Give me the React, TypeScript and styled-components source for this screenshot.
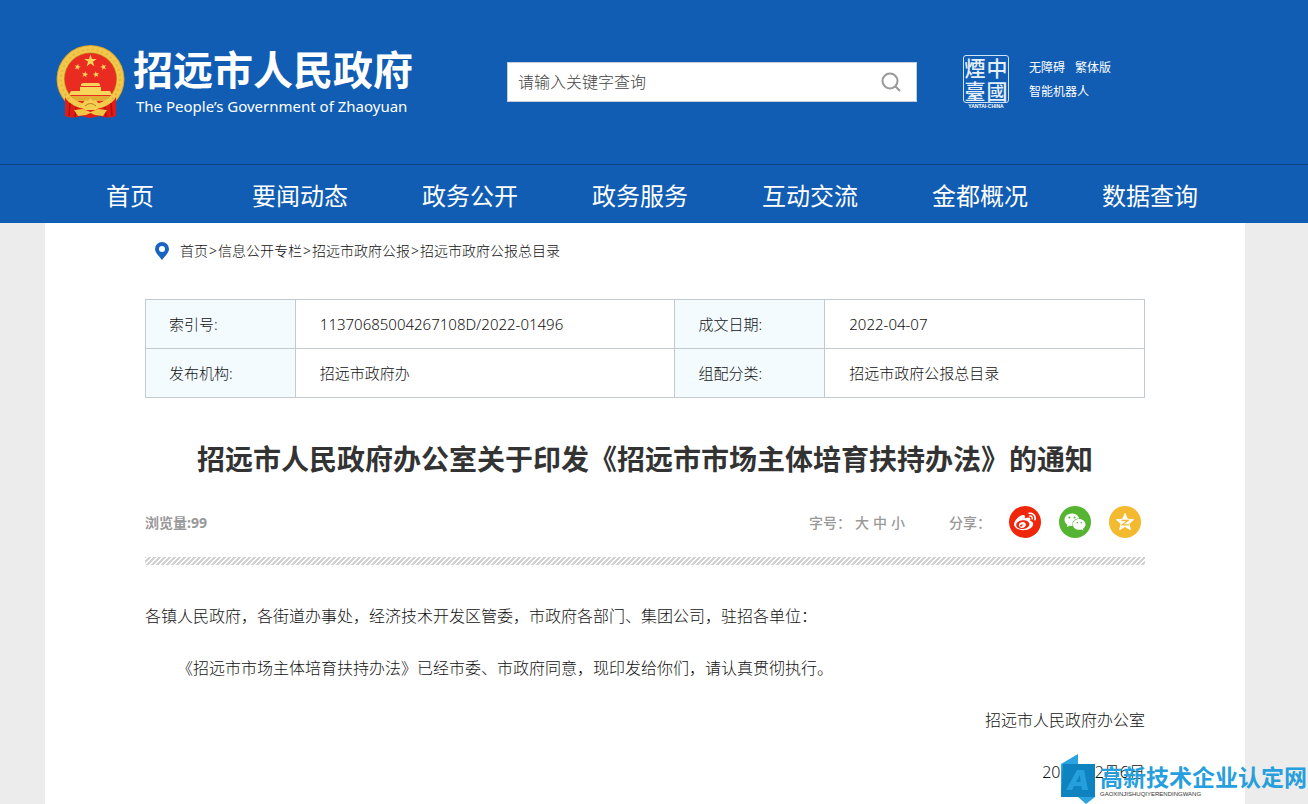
import React from "react";
import styled, { createGlobalStyle } from "styled-components";
import { FaWeibo, FaWeixin } from "react-icons/fa";

const sans = `"Noto Sans", "Noto Sans CJK SC", sans-serif`;
const cjk = `"Noto Sans CJK SC", "Noto Sans", sans-serif`;

const GlobalStyle = createGlobalStyle`
  *, *::before, *::after { box-sizing: border-box; }
  body { margin: 0; background: #ececec; color: #333; font-family: ${sans}; font-size: 14px; }
  a { color: inherit; text-decoration: none; }
  button, input { font-family: inherit; }
  h1, p { margin: 0; }
`;

const Page = styled.div`
  position: relative;
  min-height: 100vh;
  display: flex;
  flex-direction: column;
  overflow: hidden;
`;

const Header = styled.header`
  background: #115db3;
  color: #fff;
  padding-right: 18px;
`;

const Container = styled.div`
  max-width: 1200px;
  width: 100%;
  margin: 0 auto;
`;

const Masthead = styled(Container)`
  display: flex;
  align-items: center;
  height: 164px;
  padding-left: 11px;
`;

const Brand = styled.a`
  display: flex;
  align-items: center;
  gap: 8px;
  width: 451px;
`;

const BrandText = styled.span`
  display: flex;
  flex-direction: column;
  gap: 4px;
  padding-bottom: 4px;
  white-space: nowrap;
`;

const BrandName = styled.span`
  font: 700 40px/48px ${cjk};
`;

const BrandLatin = styled.span`
  font: 400 15px/20px "Noto Sans", sans-serif;
  padding-left: 3px;
`;

const Search = styled.form`
  display: flex;
  align-items: center;
  width: 410px;
  height: 40px;
  background: #fff;
  border: 1px solid #c5cedb;
`;

const SearchInput = styled.input`
  flex: 1;
  min-width: 0;
  height: 100%;
  padding: 0 10px;
  border: 0;
  outline: 0;
  background: none;
  font-size: 16px;
  font-weight: 300;
  color: #333;
  &::placeholder { color: #444; opacity: 1; }
`;

const SearchButton = styled.button`
  display: flex;
  align-items: center;
  justify-content: center;
  width: 50px;
  height: 100%;
  padding: 0;
  border: 0;
  background: none;
  cursor: pointer;
`;

const Seal = styled.a`
  display: flex;
  flex-direction: column;
  align-items: center;
  width: 46px;
  margin-left: 46px;
`;

const SealFace = styled.span`
  display: grid;
  grid-template-columns: 22px 22px;
  grid-template-rows: 23px 23px;
  border: 1px solid #cfe4f7;
  border-radius: 3px;
  font: 500 21px/23px "Noto Sans CJK TC", sans-serif;
  color: #e3f0fb;
  text-align: center;
`;

const SealCaption = styled.span`
  font: 700 5px/7px "Liberation Sans", sans-serif;
  white-space: nowrap;
`;

const QuickLinks = styled.nav`
  display: grid;
  grid-template-columns: auto auto;
  column-gap: 10px;
  margin-left: 20px;
  padding-bottom: 6px;
  font: 400 12px/24px ${cjk};
  white-space: nowrap;
`;

const WideLink = styled.a`
  grid-column: 1 / -1;
`;

const NavBar = styled.nav`
  border-top: 1px solid #0b4584;
  margin-right: -18px;
  padding-right: 18px;
`;

const NavList = styled(Container)`
  display: grid;
  grid-template-columns: repeat(7, 170px);
  height: 58px;
`;

const NavLink = styled.a`
  font: 400 24px/60px ${cjk};
  text-align: center;
`;

const Body = styled.div`
  flex: 1;
  display: flex;
  padding-right: 18px;
`;

const Sheet = styled(Container)`
  background: #fff;
  padding: 0 100px;
`;

const Breadcrumb = styled.nav`
  display: flex;
  align-items: center;
  height: 56px;
  padding-left: 9px;
  font-weight: 300;
  line-height: 20px;
  color: #111;
  svg { margin-right: 10px; }
`;

const Separator = styled.span`
  padding: 0 1px;
`;

const InfoTable = styled.table`
  width: 100%;
  margin-top: 20px;
  border-collapse: collapse;
  table-layout: fixed;
  font-size: 15px;
  line-height: 24px;
  color: #111;
`;

const Label = styled.th`
  width: 15%;
  height: 49px;
  padding: 0 23px;
  border: 1px solid #c3cacf;
  background: #f3fbff;
  font-weight: 300;
  text-align: left;
`;

const Value = styled.td<{ $width: string }>`
  width: ${(p) => p.$width};
  padding: 0 24px;
  border: 1px solid #c3cacf;
  font-weight: 300;
`;

const Title = styled.h1`
  margin-top: 40px;
  font: 700 28px/40px ${cjk};
  text-align: center;
`;

const Meta = styled.div`
  display: flex;
  align-items: center;
  height: 32px;
  margin-top: 28px;
  padding-right: 4px;
  color: #999;
`;

const Views = styled.span`
  flex: 1;
  font-weight: 700;
`;

const SizePicker = styled.div`
  display: flex;
  align-items: center;
  gap: 4px;
  font-weight: 500;
  margin-right: 44px;
`;

const SizeButton = styled.button`
  padding: 0;
  border: 0;
  background: none;
  color: inherit;
  font-size: 14px;
  font-weight: 500;
  cursor: pointer;
`;

const Share = styled.div`
  display: flex;
  align-items: center;
  gap: 18px;
  font-weight: 500;
`;

const ShareButton = styled.button<{ $color: string }>`
  display: flex;
  align-items: center;
  justify-content: center;
  width: 32px;
  height: 32px;
  padding: 0;
  border: 0;
  border-radius: 50%;
  background: ${(p) => p.$color};
  color: #fff;
  cursor: pointer;
`;

const Stripe = styled.div`
  height: 8px;
  margin-top: 19px;
  background: linear-gradient(135deg, #d2d2d2 12%, #fff 12% 38%, #d2d2d2 38% 62%, #fff 62% 88%, #d2d2d2 88%);
  background-size: 5px 5px;
`;

const Article = styled.article`
  margin-top: 25px;
  font-size: 16px;
  font-weight: 300;
  line-height: 52px;
  color: #111;
`;

const Paragraph = styled.p<{ $indent?: boolean }>`
  text-indent: ${(p) => (p.$indent ? "2em" : "0")};
`;

const SignOff = styled.p`
  text-align: right;
`;

const Watermark = styled.div`
  position: absolute;
  right: 1px;
  bottom: 0;
  display: flex;
  align-items: center;
  gap: 4px;
  height: 50px;
  white-space: nowrap;
`;

const WatermarkText = styled.div`
  display: flex;
  flex-direction: column;
  padding-top: 2px;
`;

const WatermarkName = styled.span`
  font: 700 23px/28px ${cjk};
  color: #279fdc;
`;

const WatermarkLatin = styled.span`
  font: 400 6px/8px "Liberation Sans", sans-serif;
  color: #333;
`;

const starPath = (cx: number, cy: number, r: number, tilt = 0) =>
  Array.from({ length: 10 }, (_, i) => {
    const a = ((i * 36 - 90 + tilt) * Math.PI) / 180;
    const d = i % 2 ? r * 0.39 : r;
    return `${(cx + d * Math.cos(a)).toFixed(2)},${(cy + d * Math.sin(a)).toFixed(2)}`;
  }).join(" ");

const Emblem = () => (
  <svg width="69" height="74" viewBox="0 0 69 74" aria-hidden="true">
    <circle cx="34.500" cy="34" r="34" fill="#d9a32c" />
    <circle cx="34.500" cy="34" r="33" fill="#f1c84b" />
    <circle cx="34.500" cy="34" r="29.500" fill="none" stroke="#e6b53e" strokeWidth="2" strokeDasharray="2 3" />
    <circle cx="34.500" cy="34" r="26.500" fill="#c5881f" />
    <circle cx="34.500" cy="34" r="25.800" fill="#ea2b22" />
    <g fill="#f8d65a">
      <polygon points={starPath(34.5, 16, 6.5)} />
      <polygon points={starPath(21.5, 22, 3.4, 15)} />
      <polygon points={starPath(47.5, 22, 3.4, -15)} />
      <polygon points={starPath(29, 29.5, 3.4, 10)} />
      <polygon points={starPath(40, 29.5, 3.4, -10)} />
      <path d="M25 39 L27 38 H42 L44 39 V41 H25Z" />
      <path d="M24 42 H45 V46 H54 L56 50 H13 L15 46 H24Z" />
      <path d="M15 51 H54 L50 56 H19Z" fill="#e3ad35" />
    </g>
    <path d="M9 52 Q12 59 24 63 L34.500 65 L45 63 Q57 59 60 52 L60 71 Q52 74 44 71 L34 73 L25 71 Q16 74 9 71Z" fill="#df1d16" />
    <path d="M14 58 L13 71 M20 62 L19 72 M55 58 L56 71 M49 62 L50 72" stroke="#ad110d" strokeWidth="1.500" />
    <path d="M13 50 Q23 60 34.500 59 Q46 60 56 50 L54 57 Q45 65 34.500 63 Q24 65 15 57Z" fill="#f2ca4c" />
    <path d="M27 58 L29 55 L32 56 L34.500 53 L37 56 L40 55 L42 58 L44 61 L40 65 H29 L25 61Z" fill="#f5cf51" />
    <path d="M18 65 L27 64 L34.500 67 L42 64 L51 65 L47 71 L39 70 L34.500 68 L30 70 L22 71Z" fill="#f0c445" />
    <path d="M29 61 Q34.500 56 40 61" fill="none" stroke="#b97c18" />
  </svg>
);

const navItems = ["首页", "要闻动态", "政务公开", "政务服务", "互动交流", "金都概况", "数据查询"];
const crumbs = ["首页", "信息公开专栏", "招远市政府公报", "招远市政府公报总目录"];
const infoRows = [
  ["索引号:", "11370685004267108D/2022-01496", "成文日期:", "2022-04-07"],
  ["发布机构:", "招远市政府办", "组配分类:", "招远市政府公报总目录"],
];

export default function App() {
  return (
    <Page>
      <GlobalStyle />
      <Header>
        <Masthead>
          <Brand href="#">
            <Emblem />
            <BrandText>
              <BrandName>招远市人民政府</BrandName>
              <BrandLatin>The People’s Government of Zhaoyuan</BrandLatin>
            </BrandText>
          </Brand>
          <Search onSubmit={(e) => e.preventDefault()}>
            <SearchInput aria-label="请输入关键字查询" placeholder="请输入关键字查询" />
            <SearchButton type="submit" aria-label="查询">
              <svg width="20" height="20" viewBox="0 0 20 20" fill="none" stroke="#999" strokeWidth="2">
                <circle cx="9" cy="9" r="7.500" />
                <path d="M14.300 14.300 L19 19" />
              </svg>
            </SearchButton>
          </Search>
          <Seal href="#">
            <SealFace>
              <span>煙</span>
              <span>中</span>
              <span>臺</span>
              <span>國</span>
            </SealFace>
            <SealCaption>YANTAI·CHINA</SealCaption>
          </Seal>
          <QuickLinks>
            <a href="#">无障碍</a>
            <a href="#">繁体版</a>
            <WideLink href="#">智能机器人</WideLink>
          </QuickLinks>
        </Masthead>
        <NavBar>
          <NavList>
            {navItems.map((item) => (
              <NavLink href="#" key={item}>{item}</NavLink>
            ))}
          </NavList>
        </NavBar>
      </Header>
      <Body>
        <Sheet as="main">
          <Breadcrumb>
            <svg width="16" height="20" viewBox="0 0 16 20" aria-hidden="true">
              <path
                fillRule="evenodd"
                fill="#1a63c0"
                d="M8 1a7 7 0 0 1 7 7c0 4-4.500 7.500-7 11C5.500 15.500 1 12 1 8a7 7 0 0 1 7-7zm0 4a3 3 0 1 0 0 6a3 3 0 0 0 0-6z"
              />
            </svg>
            {crumbs.map((c, i) => (
              <React.Fragment key={c}>
                {i > 0 && <Separator>&gt;</Separator>}
                <a href="#">{c}</a>
              </React.Fragment>
            ))}
          </Breadcrumb>
          <InfoTable>
            <tbody>
              {infoRows.map(([l1, v1, l2, v2]) => (
                <tr key={l1}>
                  <Label scope="row">{l1}</Label>
                  <Value $width="38%">{v1}</Value>
                  <Label scope="row">{l2}</Label>
                  <Value $width="32%">{v2}</Value>
                </tr>
              ))}
            </tbody>
          </InfoTable>
          <Title>招远市人民政府办公室关于印发《招远市市场主体培育扶持办法》的通知</Title>
          <Meta>
            <Views>浏览量:99</Views>
            <SizePicker>
              <span>字号：</span>
              <SizeButton>大</SizeButton>
              <SizeButton>中</SizeButton>
              <SizeButton>小</SizeButton>
            </SizePicker>
            <Share>
              <span>分享：</span>
              <ShareButton $color="#f0260b" aria-label="微博"><FaWeibo size={22} /></ShareButton>
              <ShareButton $color="#55b532" aria-label="微信"><FaWeixin size={22} /></ShareButton>
              <ShareButton $color="#f3b92f" aria-label="QQ空间">
                <svg width="20" height="20" viewBox="0 0 20 20">
                  <path
                    fill="#fff"
                    stroke="#fff"
                    strokeLinejoin="round"
                    d="M10 1.500 L12.400 7.200 L18.600 7.700 L13.900 11.700 L15.400 17.700 L10 14.500 L4.600 17.700 L6.100 11.700 L1.400 7.700 L7.600 7.200Z"
                  />
                  <path d="M6.500 8.500 H13 L7.500 12.800 H14" fill="none" stroke="#f3b92f" strokeWidth="1.300" />
                </svg>
              </ShareButton>
            </Share>
          </Meta>
          <Stripe />
          <Article>
            <Paragraph>各镇人民政府，各街道办事处，经济技术开发区管委，市政府各部门、集团公司，驻招各单位：</Paragraph>
            <Paragraph $indent>《招远市市场主体培育扶持办法》已经市委、市政府同意，现印发给你们，请认真贯彻执行。</Paragraph>
            <SignOff>招远市人民政府办公室</SignOff>
            <SignOff>2022年2月6日</SignOff>
          </Article>
        </Sheet>
      </Body>
      <Watermark>
        <svg width="36" height="50" viewBox="0 0 36 50" aria-hidden="true">
          <path d="M1 10 L18 0 V10 H35 V43 L26 50 L18 43 H1Z" fill="#2ba3e0" />
          <path d="M3 10 H35 V43 H1Z" fill="#0f83c0" />
          <path
            fillRule="evenodd"
            fill="#259fdc"
            d="M6 36 L17 16 H24 L28 36 H22 L21.300 32 H14 L12 36Z M16 28 H20.700 L19.800 21Z"
          />
        </svg>
        <WatermarkText>
          <WatermarkName>高新技术企业认定网</WatermarkName>
          <WatermarkLatin>GAOXINJISHUQIYERENDINGWANG</WatermarkLatin>
        </WatermarkText>
      </Watermark>
    </Page>
  );
}
